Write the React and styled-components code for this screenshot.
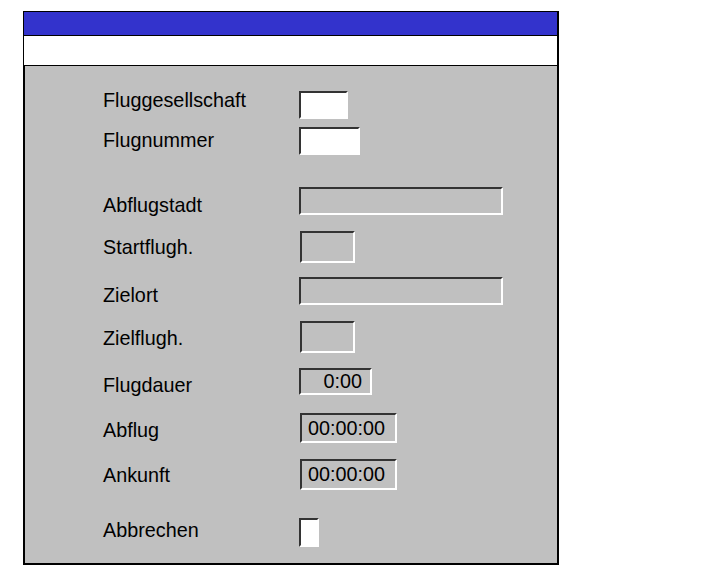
import styled, { createGlobalStyle } from 'styled-components';

const GlobalStyle = createGlobalStyle`
  html, body {
    margin: 0;
    padding: 0;
    background: #ffffff;
  }
  body {
    font-family: "Liberation Sans", Arial, sans-serif;
  }
`;

const Page = styled.div`
  padding: 11px 0 0 23px;
`;

const Frame = styled.div`
  width: 533px;
  border-top: 1px solid #000;
  border-left: 1px solid #000;
  border-right: 2px solid #000;
  border-bottom: 2px solid #000;
  display: flex;
  flex-direction: column;
`;

const TitleBar = styled.div`
  height: 23px;
  background: #3333cc;
  border-bottom: 1px solid #000;
`;

const MenuStrip = styled.div`
  height: 29px;
  background: #ffffff;
  border-bottom: 1px solid #000;
`;

const Panel = styled.div`
  background: #c0c0c0;
  border-left: 1px solid #000;
  padding: 0 0 16px 78px;
  display: flex;
  flex-direction: column;
`;

const Row = styled.div`
  display: flex;
  align-items: flex-start;
  margin-top: ${(p) => p.gap}px;
  height: ${(p) => p.h}px;
`;

const Label = styled.div`
  width: 196px;
  flex: none;
  font-size: 19.8px;
  line-height: 22px;
  color: #000;
  margin-top: ${(p) => p.dy}px;
  white-space: nowrap;
`;

const Field = styled.div`
  box-sizing: border-box;
  width: ${(p) => p.w}px;
  height: ${(p) => p.h}px;
  margin-left: ${(p) => p.dx || 0}px;
  background: ${(p) => (p.white ? '#ffffff' : '#c0c0c0')};
  border-top: 2px solid #333333;
  border-left: 2px solid #333333;
  border-right: 2px solid #ffffff;
  border-bottom: 2px solid #ffffff;
  display: flex;
  align-items: center;
  justify-content: ${(p) => (p.right ? 'flex-end' : 'flex-start')};
  padding: ${(p) => (p.right ? '0 8px 0 0' : '0 0 0 6px')};
  font-size: 19.8px;
  color: #000;
`;

const rows = [
  { label: 'Fluggesellschaft', gap: 25, dy: -2, w: 49, h: 28, white: true },
  { label: 'Flugnummer', gap: 8, dy: 2, w: 61, h: 28, white: true },
  { label: 'Abflugstadt', gap: 32, dy: 7, w: 204, h: 28 },
  { label: 'Startflugh.', gap: 16, dy: 5, w: 55, h: 32, dx: 1 },
  { label: 'Zielort', gap: 14, dy: 7, w: 204, h: 28 },
  { label: 'Zielflugh.', gap: 16, dy: 6, w: 55, h: 32, dx: 1 },
  { label: 'Flugdauer', gap: 15, dy: 6, w: 73, h: 27, value: '0:00', right: true },
  { label: 'Abflug', gap: 18, dy: 6, w: 97, h: 30, dx: 1, value: '00:00:00' },
  { label: 'Ankunft', gap: 16, dy: 5, w: 97, h: 31, dx: 1, value: '00:00:00' },
  { label: 'Abbrechen', gap: 28, dy: 1, w: 20, h: 29, white: true },
];

export default function App() {
  return (
    <>
      <GlobalStyle />
      <Page>
        <Frame>
          <TitleBar />
          <MenuStrip />
          <Panel>
            {rows.map((r) => (
              <Row key={r.label} gap={r.gap} h={r.h}>
                <Label dy={r.dy}>{r.label}</Label>
                <Field w={r.w} h={r.h} dx={r.dx} white={r.white} right={r.right}>
                  {r.value}
                </Field>
              </Row>
            ))}
          </Panel>
        </Frame>
      </Page>
    </>
  );
}
